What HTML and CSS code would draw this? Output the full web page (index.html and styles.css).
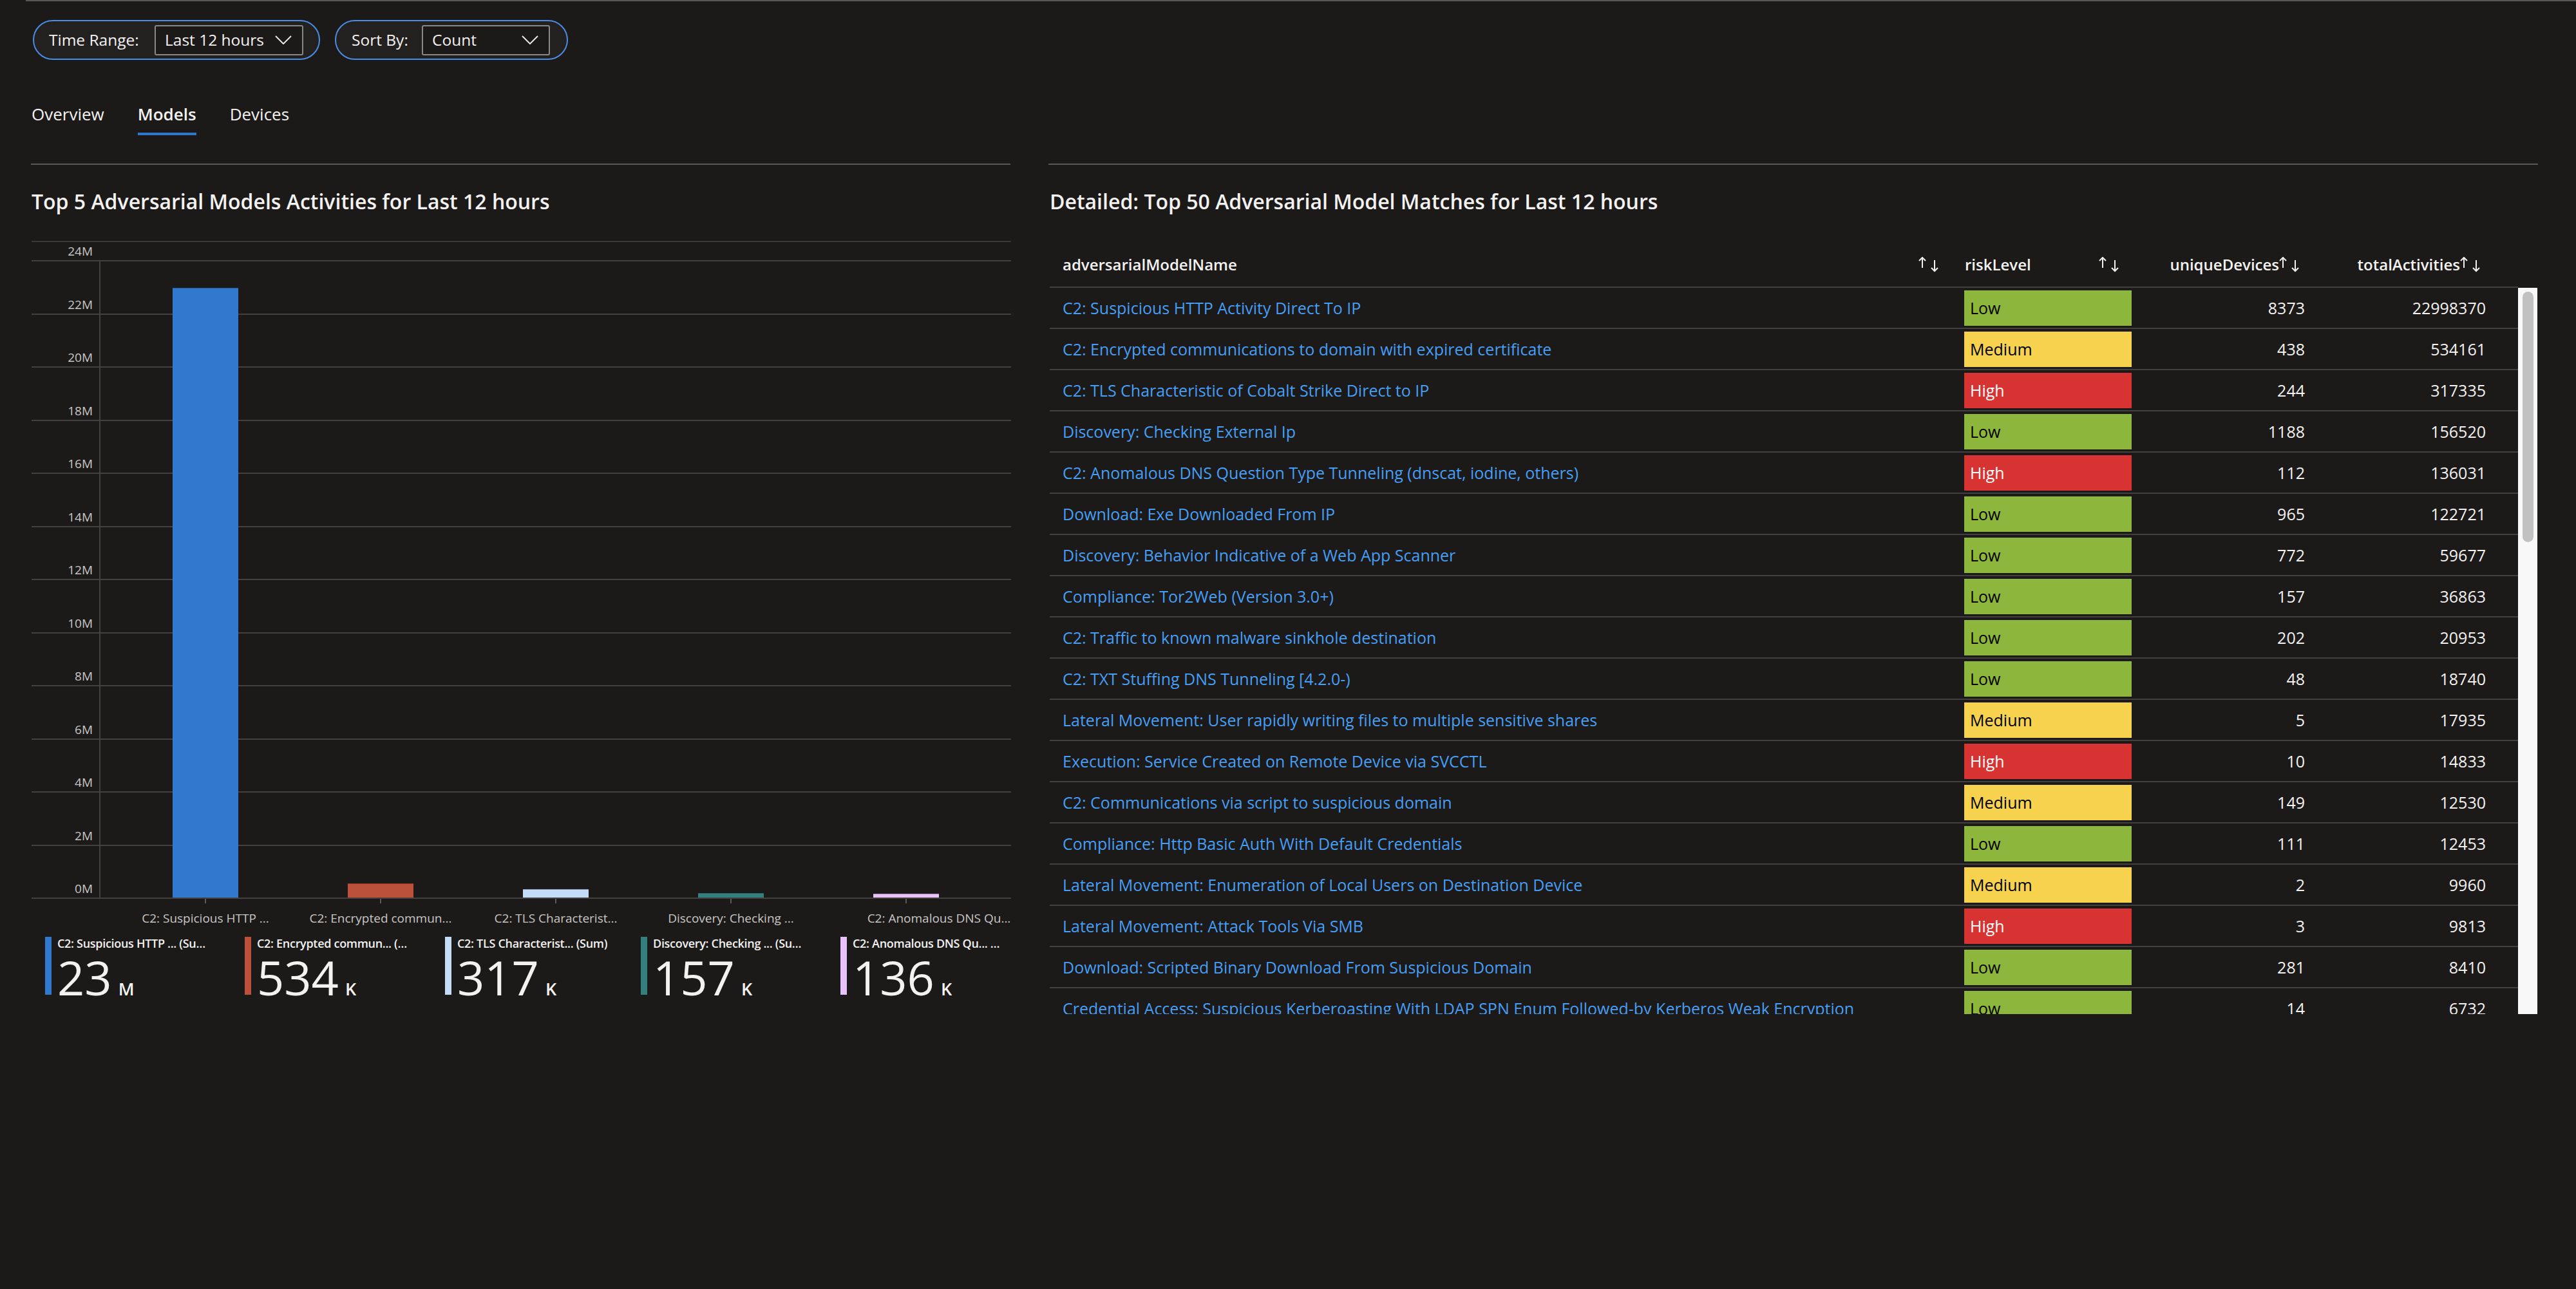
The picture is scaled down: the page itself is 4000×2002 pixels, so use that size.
FILE: index.html
```html
<!DOCTYPE html>
<html>
<head>
<meta charset="utf-8">
<link rel="stylesheet" href="styles.css">
</head>
<body>
<div class="topline"></div>
<div class="page">
  <div class="toolbar">
    <div class="pill pill-time">
      <span class="pill-label">Time Range:</span>
      <div class="dropdown dd-time"><span>Last 12 hours</span><svg class="chev" width="26" height="14" viewBox="0 0 26 14"><path d="M1 1l12 12L25 1" fill="none" stroke="#e6e6e6" stroke-width="2"/></svg></div>
    </div>
    <div class="pill pill-sort">
      <span class="pill-label">Sort By:</span>
      <div class="dropdown dd-sort"><span>Count</span><svg class="chev" width="26" height="14" viewBox="0 0 26 14"><path d="M1 1l12 12L25 1" fill="none" stroke="#e6e6e6" stroke-width="2"/></svg></div>
    </div>
  </div>

  <div class="tabs">
    <div class="tab">Overview</div>
    <div class="tab active">Models</div>
    <div class="tab">Devices</div>
  </div>

  <div class="panels">
    <section class="panel panel-left">
      <h2 class="panel-title">Top 5 Adversarial Models Activities for Last 12 hours</h2>
      <div class="chart">
        <div class="plot">
          <div class="grid-rows">
            <div class="grow first"><span>24M</span></div>
            <div class="grow"><span>22M</span></div>
            <div class="grow"><span>20M</span></div>
            <div class="grow"><span>18M</span></div>
            <div class="grow"><span>16M</span></div>
            <div class="grow"><span>14M</span></div>
            <div class="grow"><span>12M</span></div>
            <div class="grow"><span>10M</span></div>
            <div class="grow"><span>8M</span></div>
            <div class="grow"><span>6M</span></div>
            <div class="grow"><span>4M</span></div>
            <div class="grow"><span>2M</span></div>
            <div class="grow"><span>0M</span></div>
          </div>
          <div class="bars">
            <div class="slot"><div class="bar c1" style="height:947px"></div></div>
            <div class="slot"><div class="bar c2" style="height:22px"></div></div>
            <div class="slot"><div class="bar c3" style="height:13px"></div></div>
            <div class="slot"><div class="bar c4" style="height:7px"></div></div>
            <div class="slot"><div class="bar c5" style="height:6px"></div></div>
          </div>
        </div>
        <div class="xaxis">
          <div class="xslot"><div class="tick"></div><div class="xlabel">C2: Suspicious HTTP ...</div></div>
          <div class="xslot"><div class="tick"></div><div class="xlabel">C2: Encrypted commun...</div></div>
          <div class="xslot"><div class="tick"></div><div class="xlabel">C2: TLS Characterist...</div></div>
          <div class="xslot"><div class="tick"></div><div class="xlabel">Discovery: Checking ...</div></div>
          <div class="xslot"><div class="tick"></div><div class="xlabel shifted">C2: Anomalous DNS Qu...</div></div>
        </div>
      </div>
      <div class="cards">
        <div class="card"><div class="swatch c1"></div><div class="card-body"><div class="card-title">C2: Suspicious HTTP ... (Su…</div><div class="card-value">23<span class="unit">M</span></div></div></div>
        <div class="card"><div class="swatch c2"></div><div class="card-body"><div class="card-title">C2: Encrypted commun... (…</div><div class="card-value">534<span class="unit">K</span></div></div></div>
        <div class="card"><div class="swatch c3"></div><div class="card-body"><div class="card-title">C2: TLS Characterist... (Sum)</div><div class="card-value">317<span class="unit">K</span></div></div></div>
        <div class="card"><div class="swatch c4"></div><div class="card-body"><div class="card-title">Discovery: Checking ... (Su…</div><div class="card-value">157<span class="unit">K</span></div></div></div>
        <div class="card"><div class="swatch c5"></div><div class="card-body"><div class="card-title">C2: Anomalous DNS Qu... …</div><div class="card-value">136<span class="unit">K</span></div></div></div>
      </div>
    </section>

    <section class="panel panel-right">
      <h2 class="panel-title">Detailed: Top 50 Adversarial Model Matches for Last 12 hours</h2>
      <div class="table">
        <div class="thead">
          <div class="th th-name"><span>adversarialModelName</span><svg class="sort" width="33" height="24" viewBox="0 0 33 24"><path d="M6 17V1M1 6l5-5 5 5M25 5v17M20 17l5 5 5-5" fill="none" stroke="#f3f2f1" stroke-width="2"/></svg></div>
          <div class="th th-risk"><span>riskLevel</span><svg class="sort" width="33" height="24" viewBox="0 0 33 24"><path d="M6 17V1M1 6l5-5 5 5M25 5v17M20 17l5 5 5-5" fill="none" stroke="#f3f2f1" stroke-width="2"/></svg></div>
          <div class="th th-num"><span>uniqueDevices</span><svg class="sort" width="33" height="24" viewBox="0 0 33 24"><path d="M6 17V1M1 6l5-5 5 5M25 5v17M20 17l5 5 5-5" fill="none" stroke="#f3f2f1" stroke-width="2"/></svg></div>
          <div class="th th-num"><span>totalActivities</span><svg class="sort" width="33" height="24" viewBox="0 0 33 24"><path d="M6 17V1M1 6l5-5 5 5M25 5v17M20 17l5 5 5-5" fill="none" stroke="#f3f2f1" stroke-width="2"/></svg></div>
        </div>
        <div class="tbody-wrap">
          <div class="tbody">
            <div class="tr"><div class="td td-name">C2: Suspicious HTTP Activity Direct To IP</div><div class="td td-risk"><div class="badge low">Low</div></div><div class="td td-num">8373</div><div class="td td-num">22998370</div></div>
            <div class="tr"><div class="td td-name">C2: Encrypted communications to domain with expired certificate</div><div class="td td-risk"><div class="badge med">Medium</div></div><div class="td td-num">438</div><div class="td td-num">534161</div></div>
            <div class="tr"><div class="td td-name">C2: TLS Characteristic of Cobalt Strike Direct to IP</div><div class="td td-risk"><div class="badge high">High</div></div><div class="td td-num">244</div><div class="td td-num">317335</div></div>
            <div class="tr"><div class="td td-name">Discovery: Checking External Ip</div><div class="td td-risk"><div class="badge low">Low</div></div><div class="td td-num">1188</div><div class="td td-num">156520</div></div>
            <div class="tr"><div class="td td-name">C2: Anomalous DNS Question Type Tunneling (dnscat, iodine, others)</div><div class="td td-risk"><div class="badge high">High</div></div><div class="td td-num">112</div><div class="td td-num">136031</div></div>
            <div class="tr"><div class="td td-name">Download: Exe Downloaded From IP</div><div class="td td-risk"><div class="badge low">Low</div></div><div class="td td-num">965</div><div class="td td-num">122721</div></div>
            <div class="tr"><div class="td td-name">Discovery: Behavior Indicative of a Web App Scanner</div><div class="td td-risk"><div class="badge low">Low</div></div><div class="td td-num">772</div><div class="td td-num">59677</div></div>
            <div class="tr"><div class="td td-name">Compliance: Tor2Web (Version 3.0+)</div><div class="td td-risk"><div class="badge low">Low</div></div><div class="td td-num">157</div><div class="td td-num">36863</div></div>
            <div class="tr"><div class="td td-name">C2: Traffic to known malware sinkhole destination</div><div class="td td-risk"><div class="badge low">Low</div></div><div class="td td-num">202</div><div class="td td-num">20953</div></div>
            <div class="tr"><div class="td td-name">C2: TXT Stuffing DNS Tunneling [4.2.0-)</div><div class="td td-risk"><div class="badge low">Low</div></div><div class="td td-num">48</div><div class="td td-num">18740</div></div>
            <div class="tr"><div class="td td-name">Lateral Movement: User rapidly writing files to multiple sensitive shares</div><div class="td td-risk"><div class="badge med">Medium</div></div><div class="td td-num">5</div><div class="td td-num">17935</div></div>
            <div class="tr"><div class="td td-name">Execution: Service Created on Remote Device via SVCCTL</div><div class="td td-risk"><div class="badge high">High</div></div><div class="td td-num">10</div><div class="td td-num">14833</div></div>
            <div class="tr"><div class="td td-name">C2: Communications via script to suspicious domain</div><div class="td td-risk"><div class="badge med">Medium</div></div><div class="td td-num">149</div><div class="td td-num">12530</div></div>
            <div class="tr"><div class="td td-name">Compliance: Http Basic Auth With Default Credentials</div><div class="td td-risk"><div class="badge low">Low</div></div><div class="td td-num">111</div><div class="td td-num">12453</div></div>
            <div class="tr"><div class="td td-name">Lateral Movement: Enumeration of Local Users on Destination Device</div><div class="td td-risk"><div class="badge med">Medium</div></div><div class="td td-num">2</div><div class="td td-num">9960</div></div>
            <div class="tr"><div class="td td-name">Lateral Movement: Attack Tools Via SMB</div><div class="td td-risk"><div class="badge high">High</div></div><div class="td td-num">3</div><div class="td td-num">9813</div></div>
            <div class="tr"><div class="td td-name">Download: Scripted Binary Download From Suspicious Domain</div><div class="td td-risk"><div class="badge low">Low</div></div><div class="td td-num">281</div><div class="td td-num">8410</div></div>
            <div class="tr"><div class="td td-name">Credential Access: Suspicious Kerberoasting With LDAP SPN Enum Followed-by Kerberos Weak Encryption</div><div class="td td-risk"><div class="badge low">Low</div></div><div class="td td-num">14</div><div class="td td-num">6732</div></div>
          </div>
          <div class="scrollbar"><div class="thumb"></div></div>
        </div>
      </div>
    </section>
  </div>
</div>
</body>
</html>
```

FILE: styles.css
```css
* { box-sizing: border-box; }
html, body { margin: 0; padding: 0; }
body {
  width: 4000px;
  height: 2002px;
  overflow: hidden;
  background: #1b1a19;
  color: #f3f2f1;
  font-family: "Open Sans", "Noto Sans", "Liberation Sans", sans-serif;
}

.topline { height: 2px; margin-left: 40px; background: #5a5958; }
.page { padding-left: 48px; }

/* toolbar */
.toolbar { display: flex; gap: 23px; margin-top: 29px; margin-left: 3px; }
.pill {
  display: flex;
  align-items: center;
  justify-content: space-between;
  height: 62px;
  border: 2px solid #4a8de6;
  border-radius: 31px;
  background: #222120;
}
.pill-time { width: 446px; padding: 0 24px 0 23px; }
.pill-sort { width: 362px; padding: 0 26px 0 24px; }
.pill-label { font-size: 24.5px; line-height: 30px; color: #f3f2f1; white-space: nowrap; }
.dropdown {
  display: flex;
  align-items: center;
  justify-content: space-between;
  height: 47px;
  border: 2px solid #8a8886;
  border-radius: 3px;
  background: #1b1a19;
  padding: 0 16px 0 14px;
  font-size: 24.5px;
  line-height: 30px;
  white-space: nowrap;
}
.dd-time { width: 231px; }
.dd-sort { width: 199px; }
.chev { display: block; flex: none; }

/* tabs */
.tabs { display: flex; gap: 52px; margin-top: 66px; margin-left: 1px; }
.tab {
  font-size: 26px;
  line-height: 36px;
  padding-bottom: 11px;
  border-bottom: 4px solid transparent;
  color: #f3f2f1;
  white-space: nowrap;
}
.tab.active { font-weight: 600; border-bottom-color: #3178cd; }

/* panels */
.panels { display: flex; gap: 59px; margin-top: 44px; }
.panel { border-top: 2px solid #5a5958; }
.panel-left { width: 1521px; padding-left: 1px; }
.panel-right { width: 2313px; padding-left: 2px; }
.panel-title {
  margin: 35px 0 0 0;
  font-size: 32px;
  line-height: 44px;
  font-weight: 600;
  white-space: nowrap;
}

/* chart */
.chart { margin-top: 39px; border-top: 2px solid #3a3938; width: 1521px; }
.plot { display: grid; }
.grid-rows, .bars { grid-area: 1 / 1; }
.grow {
  height: 82.5px;
  border-bottom: 2px solid #424140;
  display: flex;
  align-items: flex-end;
}
.grow.first { height: 30px; }
.grow span {
  width: 95px;
  text-align: right;
  font-size: 19px;
  line-height: 20px;
  padding-bottom: 4px;
  color: #c8c6c4;
}
.bars {
  margin: 30px 0 2px 105px;
  border-left: 2px solid #424140;
  padding-left: 27px;
  display: flex;
  align-items: flex-end;
}
.slot { width: 272px; display: flex; justify-content: center; align-items: flex-end; }
.bar { width: 102px; border-top: 1px solid rgba(0, 0, 0, 0.25); }
.c1 { background: #3179cf; }
.c2 { background: #bc513b; }
.c3 { background: #c3ddf9; }
.c4 { background: #348080; }
.c5 { background: #e8c2f8; }

.xaxis { display: flex; margin-left: 107px; padding-left: 27px; }
.xslot { width: 272px; display: flex; flex-direction: column; align-items: center; }
.tick { width: 2px; height: 7px; background: #5a5958; }
.xlabel {
  margin-top: 12px;
  font-size: 19px;
  line-height: 22px;
  color: #c8c6c4;
  white-space: nowrap;
}
.xlabel.shifted { margin-left: 102px; }

/* cards */
.cards { display: flex; margin-top: 18px; padding-left: 21px; }
.card { display: flex; align-items: flex-start; flex: none; }
.card:nth-child(1) { width: 310px; }
.card:nth-child(2) { width: 311px; }
.card:nth-child(3) { width: 304px; }
.card:nth-child(4) { width: 310px; }
.card:nth-child(5) { width: 264px; }
.swatch { width: 10px; height: 90px; flex: none; }
.card-body { padding-left: 9px; margin-top: -1px; min-width: 0; overflow: hidden; }
.card-title {
  font-size: 18px;
  line-height: 22px;
  font-weight: 600;
  letter-spacing: -0.3px;
  white-space: nowrap;
}
.card-value {
  font-size: 74px;
  line-height: 74px;
  margin-top: 5px;
  white-space: nowrap;
  color: #f3f2f1;
}
.unit { font-size: 27px; font-weight: 600; margin-left: 10px; }

/* table */
.table { width: 2310px; }
.thead, .tr {
  display: grid;
  grid-template-columns: 1410px 280px 280px 281px;
  width: 2280px;
}
.thead {
  padding-top: 60px;
  padding-bottom: 18px;
  border-bottom: 2px solid #424140;
}
.th {
  display: flex;
  align-items: center;
  font-size: 24px;
  line-height: 32px;
  font-weight: 600;
  white-space: nowrap;
}
.th-name { justify-content: space-between; padding: 0 28px 0 20px; }
.th-risk { justify-content: space-between; padding: 0 28px 0 11px; }
.th-num { justify-content: flex-end; padding-right: 28px; }
.sort { display: block; flex: none; }

.tbody-wrap { display: flex; height: 1128px; overflow: hidden; }
.tbody { width: 2280px; flex: none; }
.tr {
  height: 64px;
  border-bottom: 2px solid #424140;
  align-items: center;
}
.td { font-size: 25px; line-height: 34px; white-space: nowrap; }
.td-name { padding-left: 20px; color: #479ef5; }
.td-risk { padding: 0 10px; }
.td-num { text-align: right; padding-right: 21px; color: #f3f2f1; }
.badge {
  height: 55px;
  display: flex;
  align-items: center;
  padding-left: 9px;
  font-size: 25px;
}
.badge.low { background: #8db73c; color: #000; }
.badge.med { background: #f6d24e; color: #000; }
.badge.high { background: #d83333; color: #fff; }

.scrollbar {
  width: 30px;
  height: 1128px;
  flex: none;
  background: #f8f8f8;
  padding: 6px 0 0 7px;
}
.thumb { width: 17px; height: 389px; background: #c1c1c1; border-radius: 9px; }
```
